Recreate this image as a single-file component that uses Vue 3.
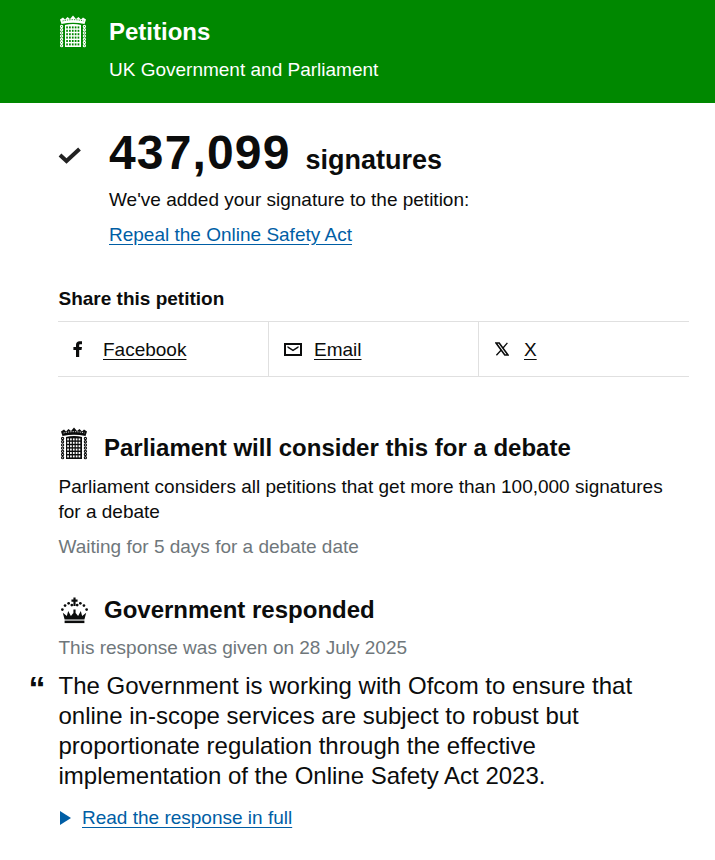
<script setup>
const shares = [
  { name: 'Facebook', icon: 'fb' },
  { name: 'Email', icon: 'mail' },
  { name: 'X', icon: 'x' }
]
const chain = [0, 1, 2, 3, 4, 5, 6]
const rows = [0, 1, 2, 3, 4, 5]
const cols = [0, 1, 2, 3, 4]
const crownDots = [[2.5,14],[5.5,9.5],[9.5,7],[13,9],[19,9],[22.5,7],[26.5,9.5],[29.5,14]]
</script>

<template>
  <div class="page">
    <svg width="0" height="0" class="defs">
      <defs>
        <symbol id="portcullis" viewBox="0 0 28 33">
          <path d="M1 4.5 L4 2.5 L6 4.5 L8.5 2 L11 4 L14 0.4 L17 4 L19.5 2 L22 4.5 L24 2.5 L27 4.5 L25.5 9 C18 7.2 10 7.2 2.5 9 Z" fill="currentColor"/>
          <path d="M3.5 6 C10 4.2 18 4.2 24.5 6" stroke="var(--hole)" stroke-width="0.8" stroke-dasharray="1.3 1" fill="none"/>
          <g fill="none" stroke="currentColor" stroke-width="1.1">
            <circle v-for="i in chain" :key="'l' + i" cx="2.6" :cy="11.5 + i * 3.2" r="1.1"/>
            <circle v-for="i in chain" :key="'r' + i" cx="25.4" :cy="11.5 + i * 3.2" r="1.1"/>
          </g>
          <path d="M6 10 C11 8.8 17 8.8 22 10 V32 H6 Z" fill="currentColor"/>
          <g fill="var(--hole)">
            <template v-for="r in rows" :key="r">
              <rect v-for="c in cols" :key="c" :x="7.2 + c * 2.85" :y="11.4 + r * 3.4" width="1.7" height="2"/>
            </template>
          </g>
        </symbol>
      </defs>
    </svg>

    <header class="top">
      <svg class="port-top"><use href="#portcullis"/></svg>
      <div class="brand">
        <div class="brand-title">Petitions</div>
        <div class="brand-sub">UK Government and Parliament</div>
      </div>
    </header>

    <section class="signed">
      <svg class="tick" viewBox="0 0 24 18" width="24" height="18">
        <path d="M2 9 L8.5 15 L21.5 3" fill="none" stroke="#222" stroke-width="4"/>
      </svg>
      <div>
        <div class="count"><span class="num">437,099</span><span class="sigs">signatures</span></div>
        <p class="added">We've added your signature to the petition:</p>
        <a class="link petition-link" href="#">Repeal the Online Safety Act</a>
      </div>
    </section>

    <section class="share">
      <h2 class="share-title">Share this petition</h2>
      <ul class="share-list">
        <li v-for="s in shares" :key="s.name" class="share-item">
          <span class="share-icon">
            <svg v-if="s.icon === 'fb'" viewBox="0 0 10 16" width="10" height="16">
              <path d="M3 16 V9 H0.4 V6 H3 V3.8 C3 1.4 4.5 0.2 6.5 0.2 H9 V3.2 H7.4 C6.4 3.2 6.2 3.7 6.2 4.4 V6 H9 L8.5 9 H6.2 V16 Z" fill="#0b0c0c"/>
            </svg>
            <svg v-else-if="s.icon === 'mail'" viewBox="0 0 18 13" width="18" height="13">
              <path d="M1 1 H17 V12 H1 Z" fill="none" stroke="#0b0c0c" stroke-width="2"/>
              <path d="M3.5 3 L9 6.5 L14.5 3 V4.8 L9 8.3 L3.5 4.8 Z" fill="#0b0c0c"/>
            </svg>
            <svg v-else viewBox="0 0 14 14" width="14" height="14">
              <path d="M1 1 H4.2 L13 13 H9.8 Z" fill="none" stroke="#0b0c0c" stroke-width="1.6"/>
              <path d="M12.4 0.8 L8 6 M6 8.2 L1.4 13.2" fill="none" stroke="#0b0c0c" stroke-width="1.3"/>
            </svg>
          </span>
          <a class="share-link" href="#">{{ s.name }}</a>
        </li>
      </ul>
    </section>

    <section class="debate">
      <div class="heading">
        <svg class="port-dark"><use href="#portcullis"/></svg>
        <h2>Parliament will consider this for a debate</h2>
      </div>
      <p class="body">Parliament considers all petitions that get more than 100,000 signatures for a debate</p>
      <p class="muted wait">Waiting for 5 days for a debate date</p>
    </section>

    <section class="response">
      <div class="heading crown-heading">
        <svg class="crown" viewBox="0 0 32 30" width="29" height="27">
          <path d="M16 0.5 V10 M12.6 4 H19.4" stroke="#0b0c0c" stroke-width="2.4" fill="none"/>
          <circle v-for="(d, i) in crownDots" :key="i" :cx="d[0]" :cy="d[1]" r="1.5" fill="#0b0c0c"/>
          <path d="M5 25 L3 17.5 L7.5 21 L9 15.5 L12 21 L14.5 18 H14.8 V14 H17.2 V18 H17.5 L20 21 L23 15.5 L24.5 21 L29 17.5 L27 25 Z" fill="#0b0c0c"/>
          <path d="M5 26.2 H27 V29 H5 Z" fill="#0b0c0c"/>
        </svg>
        <h2>Government responded</h2>
      </div>
      <p class="muted given">This response was given on 28 July 2025</p>
      <blockquote class="quote">The Government is working with Ofcom to ensure that online in-scope services are subject to robust but proportionate regulation through the effective implementation of the Online Safety Act 2023.</blockquote>
      <div class="read">
        <span class="arrow"></span>
        <a class="link" href="#">Read the response in full</a>
      </div>
    </section>
  </div>
</template>

<style>
html, body { margin: 0; background: #fff; }
</style>

<style scoped>
.page {
  font-family: "Liberation Sans", Arial, sans-serif;
  color: #0b0c0c;
  font-size: 19px;
  line-height: 25px;
  width: 715px;
  height: 860px;
  overflow: hidden;
  --hole: #fff;
}
.defs { position: absolute; }
p, h2, ul { margin: 0; padding: 0; }
.top {
  background: #008800;
  color: #fff;
  height: 103px;
  box-sizing: border-box;
  padding: 15px 0 0 59px;
  display: flex;
  --hole: #008800;
}
.port-top { width: 28px; height: 33px; color: #fff; margin-right: 22px; }
.brand-title { font-size: 24px; font-weight: 700; line-height: 33px; }
.brand-sub { margin-top: 9px; line-height: 25px; }

.signed { display: flex; padding: 25px 0 0 58px; }
.tick { margin: 18px 27px 0 0; flex: none; }
.count { display: flex; align-items: baseline; height: 50px; line-height: 50px; }
.num { font-size: 48px; font-weight: 700; letter-spacing: 1.15px; }
.sigs { font-size: 27px; font-weight: 700; margin-left: 15px; }
.added { margin-top: 9px; }
.link { color: #005ea5; text-decoration: underline; text-underline-offset: 3px; }
.petition-link { display: inline-block; margin-top: 10px; }

.share { padding: 39px 26px 0 58px; }
.share-title { font-size: 19px; font-weight: 700; line-height: 25px; padding-left: 0.5px; }
.share-list {
  list-style: none;
  display: grid;
  grid-template-columns: 211px 210px 210px;
  margin-top: 10px;
  border-top: 1px solid #e0e0e0;
  border-bottom: 1px solid #e0e0e0;
}
.share-item {
  height: 54px;
  display: flex;
  align-items: center;
  padding-left: 15px;
  border-right: 1px solid #e0e0e0;
  box-sizing: border-box;
}
.share-item:last-child { border-right: 0; }
.share-icon { display: flex; width: 30px; flex: none; }
.share-item:last-child .share-icon { width: 29px; margin-left: 1px; }
.share-link { color: #0b0c0c; text-decoration: underline; text-underline-offset: 3px; }

.debate { padding: 53px 26px 0 58.5px; }
.heading { display: flex; align-items: center; height: 36px; }
.heading h2 { font-size: 24px; line-height: 30px; font-weight: 700; }
.port-dark { width: 28px; height: 33px; margin: -10px 16.5px 0 1px; color: #0b0c0c; }
.body { margin-top: 8px; }
.muted { color: #6f777b; }
.wait { margin-top: 10px; }

.response { padding: 33px 26px 0 58.5px; position: relative; }
.crown { margin: 0 15.5px 0 1px; flex: none; }
.given { margin-top: 7px; }
.quote { margin: 11px 0 0; font-size: 24px; line-height: 30px; position: relative; width: 610px; }
.quote::before {
  content: "\201C";
  position: absolute;
  left: -30px;
  top: -1px;
  font-size: 34px;
  font-weight: 700;
  line-height: 36px;
}
.read { display: flex; align-items: center; margin-top: 14px; }
.arrow {
  width: 0; height: 0;
  border-left: 11px solid #005ea5;
  border-top: 7px solid transparent;
  border-bottom: 7px solid transparent;
  margin: 0 11px 0 1.5px;
}
</style>
